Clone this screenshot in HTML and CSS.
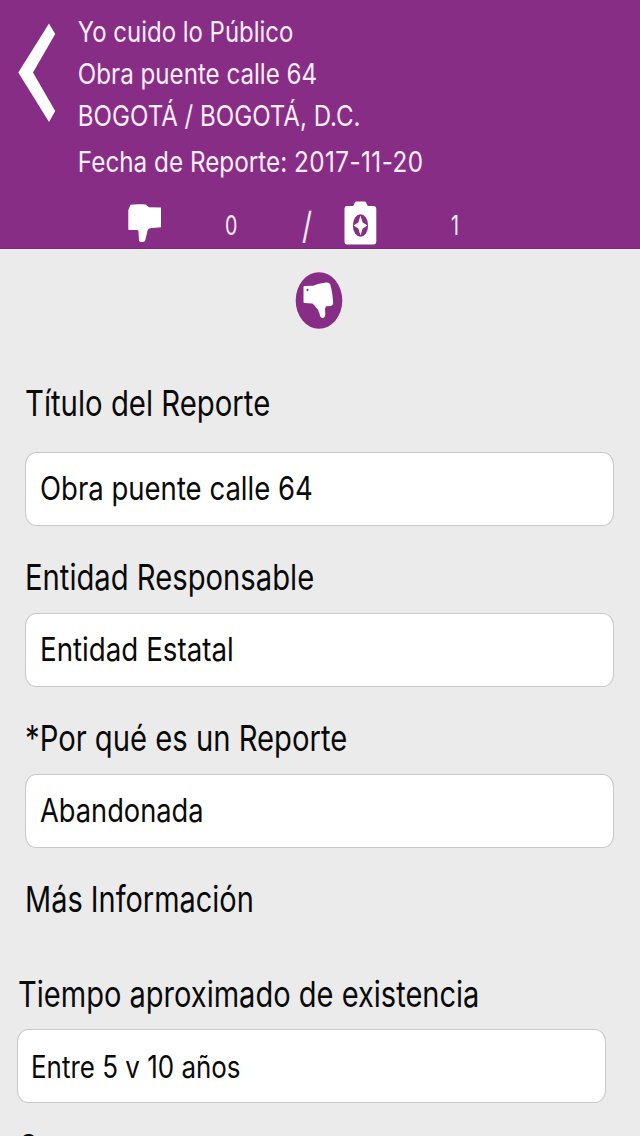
FILE: index.html
```html
<!DOCTYPE html>
<html lang="es">
<head>
<meta charset="utf-8">
<meta name="viewport" content="width=device-width">
<title>Yo cuido lo Público</title>
<link rel="stylesheet" href="styles.css">
</head>
<body>
<header class="header">
  <div class="summary">
    <a class="back" aria-label="Volver">
      <svg width="38" height="100" viewBox="0 0 38 100"><path d="M31 .5 37.2 11 15 49.500 37.200 88 31 99 .3 49.500Z" fill="#fff"/></svg>
    </a>
    <div class="details">
      <div class="line"><span class="fit app-name">Yo cuido lo Público</span></div>
      <div class="line"><span class="fit work">Obra puente calle 64</span></div>
      <div class="line"><span class="fit place">BOGOTÁ / BOGOTÁ, D.C.</span></div>
      <div class="line date-line"><span class="fit date">Fecha de Reporte: <span class="day">2017-11-20</span></span></div>
    </div>
  </div>
  <div class="stats">
    <svg class="stat-thumb" width="34" height="39" viewBox="0 0 34 39"><path d="M2.500.8C7 0 13 0 17.500.6L21 3.300 33 3.500V23.200L22 24.200C20 24.500 19.600 26 19 29L17.200 36.500C16.500 38.600 11.500 38.600 11 36.500L10.500 28C10.400 26.500 10.200 26.200 9 26H1.500C.7 26 .3 25.500.3 24.500V7C.3 5.500.8 5.500 1 4.500Z" fill="#fff"/></svg>
    <span class="count"><span class="fit">0</span></span>
    <span class="slash"><span class="fit">/</span></span>
    <svg class="stat-camera" width="33" height="44" viewBox="0 0 33 44"><path d="M3 5H8.500Q9.500 5 10 3.500L10.700 1.700Q11.200.5 12.500.5H20.500Q21.700.5 22.200 1.700L23 3.500Q23.500 5 24.500 5H29.500Q32.300 5 32.300 8V40Q32.300 43.500 29.500 43.500H3Q.5 43.500.5 40V8Q.5 5 3 5Z" fill="#fff"/><ellipse cx="16.500" cy="24.500" rx="7.600" ry="11.200" fill="#872d85"/><path d="M16.500 14.500 18.700 21.500 23.500 24.500 18.700 27.500 16.500 34.500 14.300 27.500 9.500 24.500 14.300 21.500Z" fill="#fff"/></svg>
    <span class="count"><span class="fit">1</span></span>
  </div>
</header>
<main class="content">
  <div class="vote">
    <svg width="48" height="58" viewBox="0 0 48 58"><ellipse cx="24" cy="28.500" rx="23.300" ry="28.300" fill="#872d85"/><path d="M9.300 14 18 13.700 24 11.800 31 10.600Q34.500 10.300 35.300 12.500L36.500 17.500 37.500 23.500 38.200 30.500Q38 33.700 35.500 34L31 34.300 30 37 30.300 42Q30 46.300 27.300 46 25 45.700 24.500 41.500L22.800 37.500 19 33 17.500 31.500 9.300 31Q8.500 30.700 8.500 29.700V15Q8.500 14.200 9.300 14Z" fill="#fff"/><ellipse cx="12.500" cy="18" rx="1" ry="1.300" fill="#872d85"/></svg>
  </div>
  <section class="group">
    <label class="label label-first"><span class="fit l-title">Título del Reporte</span></label>
    <div class="field field-first"><span class="fit f-title">Obra puente calle 64</span></div>
    <label class="label"><span class="fit l-entity">Entidad Responsable</span></label>
    <div class="field"><span class="fit f-entity">Entidad Estatal</span></div>
    <label class="label"><span class="fit l-reason">*Por qué es un Reporte</span></label>
    <div class="field"><span class="fit f-reason">Abandonada</span></div>
    <label class="label"><span class="fit l-more">Más Información</span></label>
  </section>
  <section class="group extra">
    <label class="label"><span class="fit l-time">Tiempo aproximado de existencia</span></label>
    <div class="field"><span class="fit f-time">Entre 5 v 10 años</span></div>
    <label class="label label-next"><span class="fit">S</span></label>
  </section>
</main>
</body>
</html>
```
FILE: styles.css
```css
* { box-sizing: border-box; }
html, body { height: 100%; margin: 0; overflow: hidden; }
body {
  display: flex;
  flex-direction: column;
  background: #ebebeb;
  color: #0a0a0a;
  font-family: Inter, "Liberation Sans", sans-serif;
}
svg { display: block; flex: none; }

/* Condensed text: each string is narrowed from its left edge. */
.fit {
  display: inline-block;
  white-space: nowrap;
  transform: scaleX(var(--fit, .83));
  transform-origin: left center;
}

.header {
  flex: none;
  height: 249px;
  background: #872d85;
  border-bottom: 1px solid #7b2a7c;
  color: #fdeefb;
}
.summary { display: flex; height: 188px; padding: 11px 0 0 18px; }
.back { width: 59px; padding-top: 12px; }
.line { height: 42px; font-size: 28.5px; line-height: 42px; }
.date-line { margin-top: 4px; }
.app-name { --fit: .84; padding-left: 1px; }
.work { --fit: .847; padding-left: 1px; }
.place { --fit: .845; padding-left: 1px; }
.date { --fit: .852; padding-left: 1px; }
.day { letter-spacing: .5px; }

.stats { display: flex; align-items: flex-start; height: 60px; padding: 13px 0 0 127.500px; }
.stat-thumb { margin-top: 3px; }
.count { width: 78px; padding: 4px 0 0 63px; font-size: 26.5px; line-height: 40px; }
.count .fit { --fit: .74; }
.stat-thumb + .count { width: 140px; }
.slash { width: 42px; font-size: 37px; line-height: 50px; }
.slash .fit { --fit: .75; }
.stat-camera + .count { padding-left: 74px; }

.content { flex: 1; min-height: 0; }
.vote { display: flex; height: 133px; padding: 23px 0 0 295px; }
.group { padding-left: 25px; }
.label { display: block; height: 42px; font-size: 35.5px; line-height: 45px; }
.label-first { line-height: 43px; }
.field {
  width: 589px;
  height: 74px;
  margin: 16px 0 29px;
  padding-left: 13.5px;
  border: 1px solid #c9c9c9;
  border-radius: 11px / 13px;
  background: #fff;
  font-size: 33px;
  line-height: 71px;
}
.field-first { margin-top: 28px; }
.l-title { --fit: .826; }
.l-entity { --fit: .823; }
.l-reason { --fit: .823; }
.l-more { --fit: .815; }
.l-time { --fit: .818; }
.f-title { --fit: .834; }
.f-entity { --fit: .84; }
.f-reason { --fit: .826; }
.f-time { --fit: .851; }

.extra { padding: 53px 0 0 17.500px; }
.extra .field { margin: 15px 0 22px -.5px; padding-left: 13px; font-size: 30.5px; line-height: 73px; }
.label-next { padding-left: 1px; }
```
